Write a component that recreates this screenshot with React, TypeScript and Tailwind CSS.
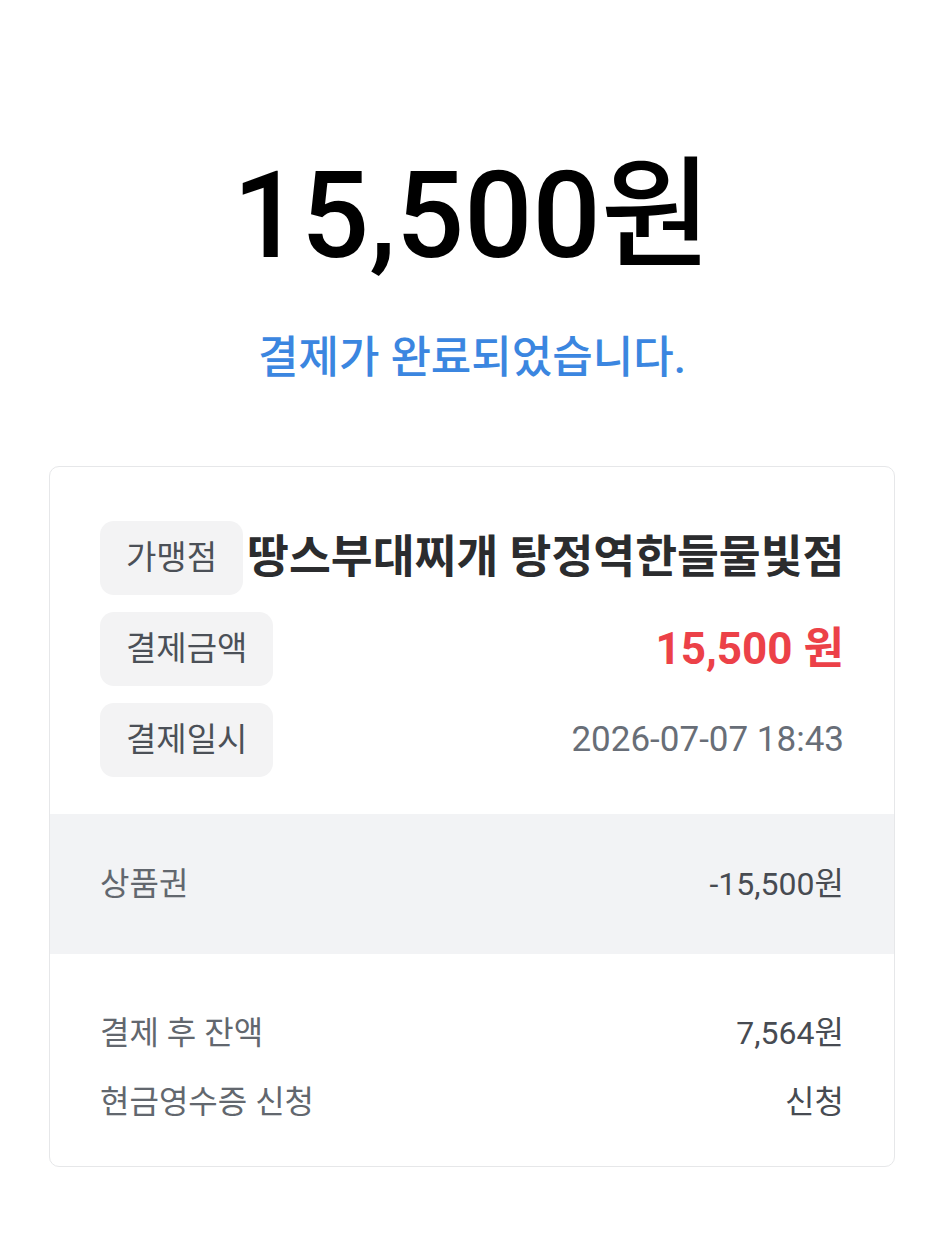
const font = { fontFamily: "Roboto, 'Noto Sans CJK KR', sans-serif" }

function Chip({ children }: { children: React.ReactNode }) {
  return (
    <span className="shrink-0 rounded-[14px] bg-[#f3f3f4] px-[26px] py-[14px] text-[33px] leading-[46px] text-[#4b5057]">
      {children}
    </span>
  )
}

export default function App() {
  return (
    <div className="min-h-screen bg-white" style={font}>
      <div className="pt-[146px] text-center text-[120px] font-medium leading-[140px] text-black">15,500원</div>
      <div className="mt-[42px] text-center text-[44px] font-medium leading-[60px] text-[#3b86e0]">결제가 완료되었습니다.</div>

      <div className="mx-[49px] mt-[78px] overflow-hidden rounded-[10px] border border-[#e6e7e9]">
        <div className="flex flex-col gap-[17px] px-[50px] pt-[54px] pb-[37px]">
          <div className="flex items-center justify-between gap-[4px]">
            <Chip>가맹점</Chip>
            <span className="whitespace-nowrap text-right text-[45.5px] font-bold leading-[60px] text-[#2b2c2e]">
              땅스부대찌개 탕정역한들물빛점
            </span>
          </div>
          <div className="flex items-center justify-between">
            <Chip>결제금액</Chip>
            <span className="text-[44px] font-bold leading-[60px] text-[#ec4148]">15,500 원</span>
          </div>
          <div className="flex items-center justify-between">
            <Chip>결제일시</Chip>
            <span className="text-[35px] leading-[46px] text-[#686e77]">2026-07-07 18:43</span>
          </div>
        </div>

        <div className="flex h-[140px] items-center justify-between bg-[#f2f3f5] px-[50px] text-[32px]">
          <span className="text-[#62676e]">상품권</span>
          <span className="text-[#474b52]">-15,500원</span>
        </div>

        <div className="flex flex-col gap-[22px] px-[50px] pt-[56px] pb-[40px] text-[32px] leading-[47px]">
          <div className="flex justify-between">
            <span className="text-[#62676e]">결제 후 잔액</span>
            <span className="text-[#474b52]">7,564원</span>
          </div>
          <div className="flex justify-between">
            <span className="text-[#62676e]">현금영수증 신청</span>
            <span className="text-[#474b52]">신청</span>
          </div>
        </div>
      </div>
    </div>
  )
}
